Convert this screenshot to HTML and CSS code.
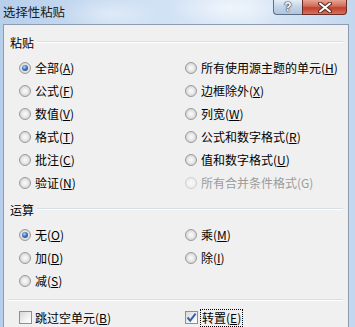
FILE: index.html
```html
<!DOCTYPE html>
<html lang="zh-CN">
<head>
    <meta charset="UTF-8">
    <title>选择性粘贴</title>
    <link rel="stylesheet" href="styles.css">
</head>
<body>
    <div class="window">
        <!-- title bar -->
        <div class="titlebar">
            <span class="title">选择性粘贴</span>
            <div class="caption-btns">
                <div class="cap-btn help-btn">?</div>
                <div class="cap-btn close-btn">
                    <svg width="14" height="11" viewBox="0 0 14 11">
                        <path d="M2 1.5 L12 9.5 M12 1.5 L2 9.5" stroke="#5a2a22" stroke-width="4" stroke-linecap="round"/>
                        <path d="M2 1.5 L12 9.5 M12 1.5 L2 9.5" stroke="#fff" stroke-width="2" stroke-linecap="round"/>
                    </svg>
                </div>
            </div>
        </div>

        <div class="client">
            <div class="group-title first"><span>粘贴</span></div>
            <div class="options">
                <label class="opt"><span class="radio checked"></span>全部(<u>A</u>)</label>
                <label class="opt"><span class="radio"></span>所有使用源主题的单元(<u>H</u>)</label>
                <label class="opt"><span class="radio"></span>公式(<u>F</u>)</label>
                <label class="opt"><span class="radio"></span>边框除外(<u>X</u>)</label>
                <label class="opt"><span class="radio"></span>数值(<u>V</u>)</label>
                <label class="opt"><span class="radio"></span>列宽(<u>W</u>)</label>
                <label class="opt"><span class="radio"></span>格式(<u>T</u>)</label>
                <label class="opt"><span class="radio"></span>公式和数字格式(<u>R</u>)</label>
                <label class="opt"><span class="radio"></span>批注(<u>C</u>)</label>
                <label class="opt"><span class="radio"></span>值和数字格式(<u>U</u>)</label>
                <label class="opt"><span class="radio"></span>验证(<u>N</u>)</label>
                <label class="opt disabled"><span class="radio"></span>所有合并条件格式(G)</label>
            </div>

            <div class="group-title"><span>运算</span></div>
            <div class="options">
                <label class="opt"><span class="radio checked"></span>无(<u>O</u>)</label>
                <label class="opt"><span class="radio"></span>乘(<u>M</u>)</label>
                <label class="opt"><span class="radio"></span>加(<u>D</u>)</label>
                <label class="opt"><span class="radio"></span>除(<u>I</u>)</label>
                <label class="opt"><span class="radio"></span>减(<u>S</u>)</label>
            </div>

            <div class="separator"></div>

            <div class="options checks">
                <label class="opt"><span class="checkbox"></span>跳过空单元(<u>B</u>)</label>
                <label class="opt"><span class="checkbox checked">
                    <svg width="11" height="11" viewBox="0 0 11 11">
                        <path d="M1.5 5.5 L4.2 8.6 L9.6 1.6" fill="none" stroke="#3b5fa8" stroke-width="2"/>
                    </svg>
                </span><span class="focus">转置(<u>E</u>)</span></label>
            </div>
        </div>
    </div>
</body>
</html>
```

FILE: styles.css
```css
body {
    margin: 0;
    padding: 0;
    font-family: "Noto Sans CJK SC", "Microsoft YaHei", sans-serif;
    font-size: 12px;
    color: #000;
}

.window {
    width: 355px;
    height: 327px;
    overflow: hidden;
    background: linear-gradient(90deg, #b7cfeb 0%, #cfe0f4 40%, #dbe8f7 70%, #c3d8ef 100%);
}

.titlebar {
    height: 24px;
    display: flex;
    align-items: center;
    justify-content: space-between;
    padding-left: 3px;
    background:
        radial-gradient(ellipse 60px 20px at 230px 8px, rgba(255, 255, 255, 0.6), rgba(255, 255, 255, 0)),
        radial-gradient(ellipse 50px 18px at 110px 14px, rgba(255, 255, 255, 0.4), rgba(255, 255, 255, 0));
}

.title {
    color: #1a1a1a;
    font-size: 12.4px;
}

.caption-btns {
    display: flex;
    align-self: flex-start;
    margin-right: 8px;
}

.cap-btn {
    height: 15px;
    box-sizing: border-box;
    border: 1px solid #5f6f85;
    border-top: none;
    display: flex;
    align-items: center;
    justify-content: center;
}

.help-btn {
    width: 29px;
    border-right: none;
    border-radius: 0 0 0 4px;
    background: linear-gradient(#e6eef8, #c4d5e8 50%, #aec5de);
    color: #fff;
    font-family: "Liberation Sans", sans-serif;
    font-weight: bold;
    font-size: 12px;
    text-shadow: 0 0 1px #2a3a55, 0 0 1px #2a3a55, 0 0 2px #2a3a55;
}

.close-btn {
    width: 45px;
    border-color: #6b2d25;
    border-radius: 0 0 4px 0;
    background: linear-gradient(#e7a494, #d26a56 45%, #c2402d 55%, #d8715a);
}

.client {
    margin: 0 6px 0 3px;
    height: 303px;
    border: 1px solid #8c9bb0;
    border-bottom: none;
    background-color: #f0f0f0;
}

.group-title {
    display: flex;
    align-items: center;
    height: 16px;
    margin-top: 7px;
    padding-left: 6px;
    margin-right: 5px;
}

.group-title.first {
    margin-top: 9px;
}

.group-title::after {
    content: "";
    flex: 1;
    margin-left: 3px;
    border-top: 1px solid #d5dfe5;
    border-bottom: 1px solid #fff;
}

.options {
    display: grid;
    grid-template-columns: 166px 1fr;
    margin-top: 6px;
    padding-left: 15px;
}

.opt {
    height: 23px;
    display: flex;
    align-items: center;
}

.opt.disabled {
    color: #9b9b9b;
}

.radio {
    width: 10px;
    height: 10px;
    margin-right: 4px;
    border: 1px solid #9a9a9a;
    border-radius: 50%;
    background: radial-gradient(circle, #fafafa 0, #f0f0f0 30%, #d4d4d4 75%, #e8e8e8 100%);
    display: flex;
    align-items: center;
    justify-content: center;
}

.disabled .radio {
    border-color: #cfcfcf;
    background: radial-gradient(circle, #fbfbfb 0, #eeeeee 60%, #e4e4e4 100%);
}

.radio.checked::after {
    content: "";
    width: 6px;
    height: 6px;
    border-radius: 50%;
    background: radial-gradient(circle at 40% 35%, #b9d5f5 0, #3d74bd 45%, #173f78 100%);
}

.separator {
    margin: 7px 5px 0 4px;
    border-top: 1px solid #d5dfe5;
    border-bottom: 1px solid #fff;
}

.checks {
    margin-top: 5px;
}

.checkbox {
    width: 11px;
    height: 11px;
    margin-right: 3px;
    border: 1px solid #8f8f8f;
    background: linear-gradient(135deg, #d9d9d9, #f2f2f2 60%, #ffffff);
    display: flex;
    align-items: center;
    justify-content: center;
}

.checkbox.checked {
    margin-right: 2px;
}

.focus {
    border: 1px dotted #000;
    padding: 0 1px;
    line-height: 16px;
}
```
